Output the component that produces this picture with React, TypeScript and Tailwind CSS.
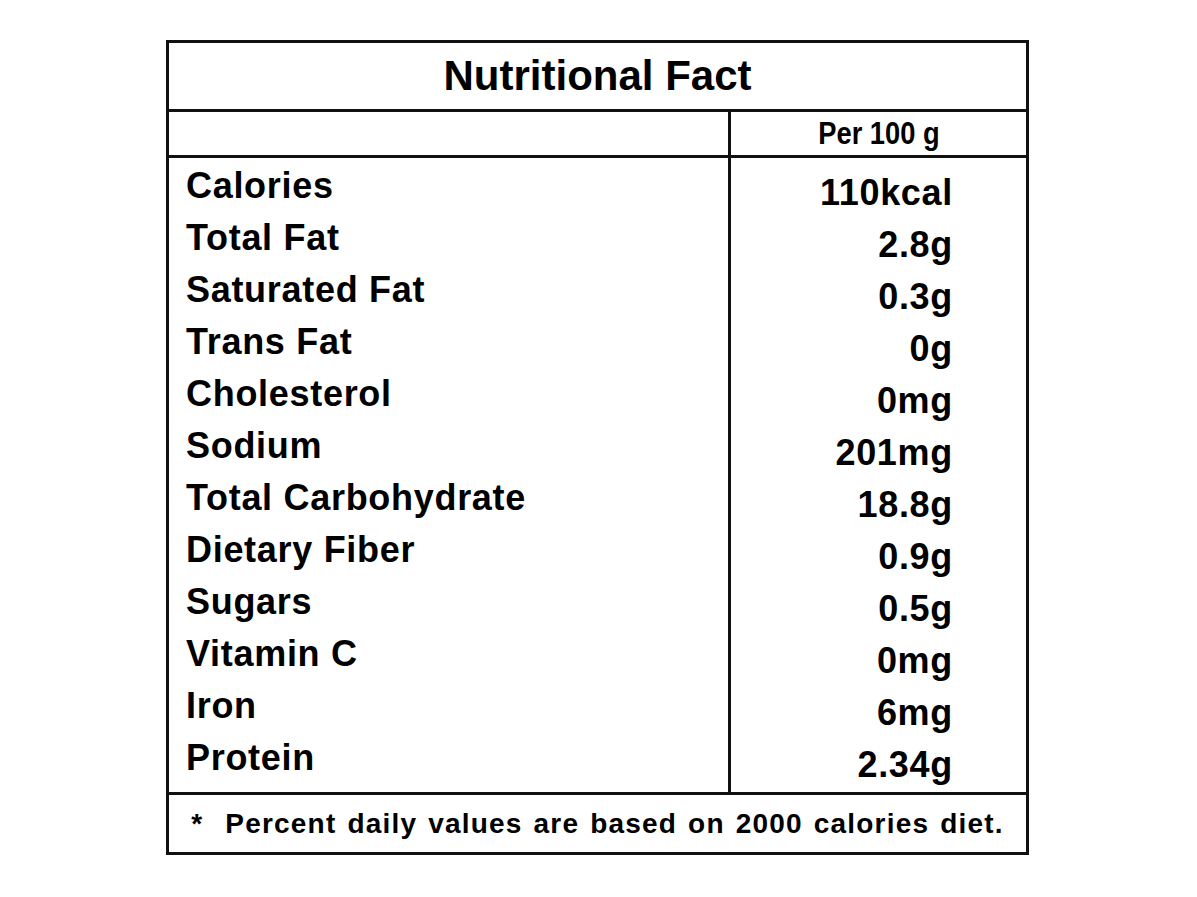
const rows: [string, string][] = [
  ["Calories", "110kcal"],
  ["Total Fat", "2.8g"],
  ["Saturated Fat", "0.3g"],
  ["Trans Fat", "0g"],
  ["Cholesterol", "0mg"],
  ["Sodium", "201mg"],
  ["Total Carbohydrate", "18.8g"],
  ["Dietary Fiber", "0.9g"],
  ["Sugars", "0.5g"],
  ["Vitamin C", "0mg"],
  ["Iron", "6mg"],
  ["Protein", "2.34g"],
];

export default function App() {
  return (
    <div className="min-h-screen bg-white pt-10 text-black font-['Liberation_Sans',Arial,sans-serif]">
      <div className="ml-[166px] w-[863px] border-[3px] border-[#111]">
        <div className="h-[69px] flex items-center justify-center border-b-[3px] border-[#111]">
          <h1 className="text-[42px] font-bold leading-none">Nutritional Fact</h1>
        </div>

        <div className="grid grid-cols-[562px_1fr] h-[46px] border-b-[3px] border-[#111]">
          <div className="border-r-[3px] border-[#111]" />
          <div className="flex items-center justify-center">
            <span className="inline-block text-[31px] font-bold leading-none scale-x-[0.88]">Per 100 g</span>
          </div>
        </div>

        <div className="grid grid-cols-[562px_1fr] border-b-[3px] border-[#111]">
          <div className="border-r-[3px] border-[#111] pl-[17px] pt-[2px] pb-[8px]">
            {rows.map(([label]) => (
              <div key={label} className="text-[36px] font-bold tracking-[0.7px] leading-[52px] whitespace-nowrap">
                {label}
              </div>
            ))}
          </div>
          <div className="pr-[73px] pt-[9px] pb-[1px] text-right">
            {rows.map(([label, value]) => (
              <div key={label} className="text-[36px] font-bold tracking-[0.7px] leading-[52px] whitespace-nowrap">
                {value}
              </div>
            ))}
          </div>
        </div>

        <div className="h-[57px] flex items-center justify-center">
          <p className="text-[28px] font-bold tracking-[1.2px] [word-spacing:2px] leading-none whitespace-nowrap">
            *&nbsp; Percent daily values are based on 2000 calories diet.
          </p>
        </div>
      </div>
    </div>
  );
}
